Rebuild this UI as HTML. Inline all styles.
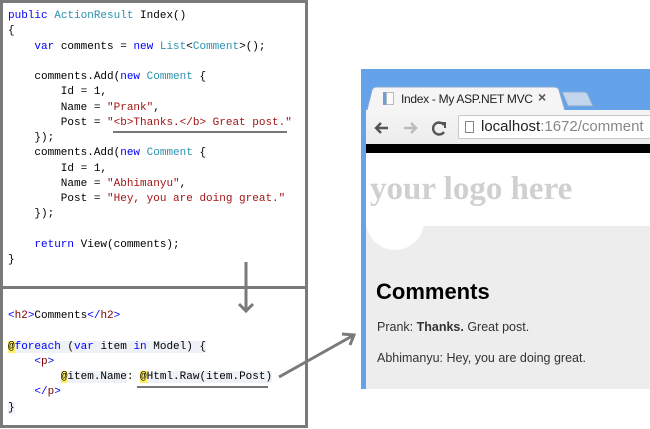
<!DOCTYPE html>
<html><head><style>
*{margin:0;padding:0}
body{width:650px;height:429px;background:#fff;position:relative;overflow:hidden;font-family:"Liberation Mono",monospace}
.code{position:absolute;left:8px;font-size:11px;line-height:15.25px;white-space:pre;color:#000}
.k{color:#0000ff}.t{color:#2b91af}.s{color:#a31515}.h{color:#800000}.tg{color:#0000ff}
.y{background:#ffee62}
.bg{background:#eef2f7}
.abs{position:absolute}
</style></head><body>
<div class="abs" style="left:0;top:0;width:302px;height:422px;border:3px solid #7a7a7a"></div>
<div class="abs" style="left:0;top:286px;width:306px;height:3px;background:#7a7a7a"></div>
<div class="code" style="top:9px"><span class="k">public</span> <span class="t">ActionResult</span> Index()
{
    <span class="k">var</span> comments = <span class="k">new</span> <span class="t">List</span>&lt;<span class="t">Comment</span>&gt;();

    comments.Add(<span class="k">new</span> <span class="t">Comment</span> {
        Id = 1,
        Name = <span class="s">"Prank"</span>,
        Post = <span class="s">"&lt;b&gt;Thanks.&lt;/b&gt; Great post."</span>
    });
    comments.Add(<span class="k">new</span> <span class="t">Comment</span> {
        Id = 1,
        Name = <span class="s">"Abhimanyu"</span>,
        Post = <span class="s">"Hey, you are doing great."</span>
    });

    <span class="k">return</span> View(comments);
}</div>
<div class="abs" style="left:113px;top:131px;width:174px;height:2px;background:#777"></div>
<div class="code" style="top:309px"><span class="tg">&lt;</span><span class="h">h2</span><span class="tg">&gt;</span>Comments<span class="tg">&lt;/</span><span class="h">h2</span><span class="tg">&gt;</span>

<span class="bg"><span class="y">@</span><span class="k">foreach</span> (<span class="k">var</span> item <span class="k">in</span> Model) {</span>
    <span class="tg">&lt;</span><span class="h">p</span><span class="tg">&gt;</span>
        <span class="bg"><span class="y">@</span>item.Name</span>: <span class="bg"><span class="y">@</span>Html.Raw(item.Post)</span>
    <span class="tg">&lt;/</span><span class="h">p</span><span class="tg">&gt;</span>
<span class="bg">}</span></div>
<div class="abs" style="left:137px;top:386px;width:131px;height:2px;background:#777"></div>
<svg class="abs" style="left:0;top:0" width="650" height="429">
<g stroke="#7a7a7a" stroke-width="3" fill="none">
<line x1="246" y1="262" x2="246" y2="311"/>
<polyline points="239,304 246,311 253,304"/>
<line x1="279" y1="377" x2="354" y2="335"/>
<polyline points="342,334 354,335 350,345"/>
</g>
</svg>
<!-- browser -->
<div class="abs" style="left:361px;top:69px;width:289px;height:320px;background:#64a2ea"></div>
<div class="abs" style="left:366px;top:112px;width:284px;height:277px;background:#fff"></div>
<svg class="abs" style="left:366px;top:86px" width="284" height="28">
<path d="M0,28 L6,4 Q7,1 11,1 L188,1 Q192,1 193,4 L200,28 Z" fill="#f5f5f5" stroke="#8aa9d2"/>
<path d="M196,6 L218,6 Q221,6 222,9 L227,20 L202,20 Z" fill="#c3d5ec" stroke="#8aa9d2"/>
</svg>
<div class="abs" style="left:366px;top:110px;width:284px;height:34px;background:linear-gradient(#f5f5f5,#ececec)"></div>
<div class="abs" style="left:383px;top:92px;width:3px;height:13px;background:#6b9fd8"></div>
<div class="abs" style="left:386px;top:92px;width:8px;height:13px;border:1px solid #bbb;box-sizing:border-box;background:#fafafa"></div>
<div class="abs" style="left:401px;top:92px;font:12px 'Liberation Sans',sans-serif;color:#222;letter-spacing:-0.3px">Index - My ASP.NET MVC</div>
<div class="abs" style="left:538px;top:89px;font:bold 14px 'Liberation Sans',sans-serif;color:#555">×</div>
<svg class="abs" style="left:372px;top:118px" width="80" height="20">
<g stroke-width="2.4" fill="none">
<path d="M4,10 H16 M9,5 L4,10 L9,15" stroke="#555"/>
<path d="M32,10 H44 M39,5 L44,10 L39,15" stroke="#bbb"/>
<path d="M72,7 A6,6 0 1 0 72,14" stroke="#555"/>
<path d="M67,5 L73,5 L73,10" stroke="#555" stroke-width="2"/>
</g>
</svg>
<div class="abs" style="left:458px;top:115px;width:200px;height:24px;border:1px solid #c8c8c8;border-radius:2px;background:#fff;box-sizing:border-box"></div>
<div class="abs" style="left:465px;top:121px;width:9px;height:12px;border:1px solid #888;box-sizing:border-box"></div>
<div class="abs" style="left:481px;top:118px;font:15px 'Liberation Sans',sans-serif;color:#222">localhost<span style="color:#888">:1672/comment</span></div>
<div class="abs" style="left:366px;top:144px;width:284px;height:9px;background:#000"></div>
<div class="abs" style="left:366px;top:153px;width:284px;height:236px;background:#fff"></div>
<div class="abs" style="left:370px;top:171px;font:bold 33px 'Liberation Serif',serif;color:#d0d0d0;letter-spacing:0px">your logo here</div>
<div class="abs" style="left:366px;top:226px;width:284px;height:163px;background:#ededed"></div>
<div class="abs" style="left:366px;top:206px;width:58px;height:44px;border-radius:0 0 29px 29px;background:#fff"></div>
<div class="abs" style="left:376px;top:279px;font:bold 22px 'Liberation Sans',sans-serif;color:#000">Comments</div>
<div class="abs" style="left:377px;top:320px;font:12.5px 'Liberation Sans',sans-serif;color:#333">Prank: <b>Thanks.</b> Great post.</div>
<div class="abs" style="left:377px;top:351px;font:12.5px 'Liberation Sans',sans-serif;color:#333">Abhimanyu: Hey, you are doing great.</div>
</body></html>
